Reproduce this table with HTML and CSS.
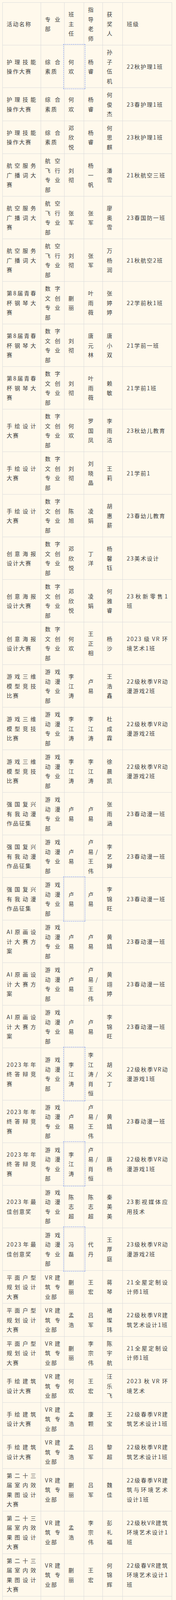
FILE: index.html
```html
<!DOCTYPE html>
<html lang="zh-CN">
<head>
<meta charset="utf-8">
<meta name="viewport" content="width=device-width, initial-scale=1">
<title>获奖名单</title>
<link rel="stylesheet" href="styles.css">
</head>
<body>
<div class="page">
<table class="awards">
<colgroup><col class="c1"><col class="c2"><col class="c3"><col class="c4"><col class="c5"><col class="c6"></colgroup>
<tbody>
<tr><td>活动名称</td><td>专业部</td><td>班主任</td><td>指导老师</td><td>获奖人</td><td>班级</td></tr>
<tr><td>护理技能操作大赛</td><td>综合素质</td><td class="sel">何欢</td><td>杨睿</td><td>孙子伍机</td><td>22秋护理1班</td></tr>
<tr><td>护理技能操作大赛</td><td>综合素质</td><td>何欢</td><td>杨睿</td><td>何俊杰</td><td>23春护理1班</td></tr>
<tr><td>护理技能操作大赛</td><td>综合素质</td><td>邓欣悦</td><td>杨睿</td><td>何思麒</td><td>23秋护理1班</td></tr>
<tr><td>航空服务广播词大赛</td><td>航空飞行专业部</td><td>刘彻</td><td>杨一帆</td><td>潘雪</td><td>21秋航空三班</td></tr>
<tr><td>航空服务广播词大赛</td><td>航空飞行专业部</td><td>张军</td><td>张军</td><td>廖奥雪</td><td>23春国防一班</td></tr>
<tr><td>航空服务广播词大赛</td><td>航空飞行专业部</td><td>刘彻</td><td>张军</td><td>万杨润</td><td>21秋航空2班</td></tr>
<tr><td>第8届青春杯钢琴大赛</td><td>数字文创专业部</td><td>蒯丽</td><td>叶雨薇</td><td>张婷婷</td><td>22学前秋1班</td></tr>
<tr><td>第8届青春杯钢琴大赛</td><td>数字文创专业部</td><td>刘彻</td><td>唐元林</td><td>唐小双</td><td>21学前一班</td></tr>
<tr><td>第8届青春杯钢琴大赛</td><td>数字文创专业部</td><td>刘彻</td><td>叶雨薇</td><td>赖敏</td><td>21学前1班</td></tr>
<tr><td>手绘设计大赛</td><td>数字文创专业部</td><td>何欢</td><td>罗国凤</td><td>李雨洁</td><td>23秋幼儿教育</td></tr>
<tr><td>手绘设计大赛</td><td>数字文创专业部</td><td>刘彻</td><td>刘晓晶</td><td>王莉</td><td>21学前1</td></tr>
<tr><td>手绘设计大赛</td><td>数字文创专业部</td><td>陈旭</td><td>凌娟</td><td>胡惠薪</td><td>23春幼儿教育</td></tr>
<tr><td>创意海报设计大赛</td><td>数字文创专业部</td><td>邓欣悦</td><td>丁洋</td><td>杨馨钰</td><td>23美术设计</td></tr>
<tr><td>创意海报设计大赛</td><td>数字文创专业部</td><td>邓欣悦</td><td>凌娟</td><td>何雅睿</td><td>23秋新零售1班</td></tr>
<tr><td>创意海报设计大赛</td><td>数字文创专业部</td><td>何欢</td><td>王正相</td><td>杨沙</td><td>2023级VR环境艺术1班</td></tr>
<tr><td>游戏三维模型竞技比赛</td><td>游戏动漫专业部</td><td>李江涛</td><td>卢易</td><td>王浩鑫</td><td>22级秋季VR动漫游戏2班</td></tr>
<tr><td>游戏三维模型竞技比赛</td><td>游戏动漫专业部</td><td>李江涛</td><td>李江涛</td><td>杜成霖</td><td>22级秋季VR动漫游戏2班</td></tr>
<tr><td>游戏三维模型竞技比赛</td><td>游戏动漫专业部</td><td>李江涛</td><td>李江涛</td><td>徐晨凯</td><td>22级秋季VR动漫游戏2班</td></tr>
<tr><td>强国复兴有我动漫作品征集</td><td>游戏动漫专业部</td><td>卢易</td><td>卢易</td><td>张雨涵</td><td>23春动漫一班</td></tr>
<tr><td>强国复兴有我动漫作品征集</td><td>游戏动漫专业部</td><td>卢易</td><td>卢易/王伟</td><td>李艺婵</td><td>23春动漫一班</td></tr>
<tr><td>强国复兴有我动漫作品征集</td><td>游戏动漫专业部</td><td class="sel">卢易</td><td>卢易</td><td>李锦旺</td><td>23春动漫一班</td></tr>
<tr><td>AI原画设计大赛方案</td><td>游戏动漫专业部</td><td>卢易</td><td>卢易</td><td>黄婧</td><td>23春动漫一班</td></tr>
<tr><td>AI原画设计大赛方案</td><td>游戏动漫专业部</td><td>卢易</td><td>卢易/王伟</td><td>黄翊婷</td><td>23春动漫一班</td></tr>
<tr><td>AI原画设计大赛方案</td><td>游戏动漫专业部</td><td>卢易</td><td>卢易</td><td>李锦旺</td><td>23春动漫一班</td></tr>
<tr><td>2023年年终答辩竞赛</td><td>游戏动漫专业部</td><td class="sel">李江涛</td><td>李江涛/肖恒</td><td>胡义丁</td><td>22级秋季VR动漫游戏1班</td></tr>
<tr><td>2023年年终答辩竞赛</td><td>游戏动漫专业部</td><td>卢易</td><td>卢易/王伟</td><td>黄婧</td><td>23春动漫一班</td></tr>
<tr><td>2023年年终答辩竞赛</td><td>游戏动漫专业部</td><td class="sel">李江涛</td><td>卢易/肖恒</td><td>唐杨</td><td>22级秋季VR动漫游戏1班</td></tr>
<tr><td>2023年最佳创意奖</td><td>游戏动漫专业部</td><td>陈志超</td><td>陈志超</td><td>秦美美</td><td>23影视媒体应用技术</td></tr>
<tr><td>2023年最佳创意奖</td><td>游戏动漫专业部</td><td class="sel">冯磊</td><td>代丹</td><td>王厚庭</td><td>23级秋季VR动漫游戏2班</td></tr>
<tr><td>平面户型规划设计大赛</td><td>VR建筑专业部</td><td>蒯丽</td><td>王宏</td><td>蒋琴</td><td>21全屋定制设计师1班</td></tr>
<tr><td>平面户型规划设计大赛</td><td>VR建筑专业部</td><td>孟浩</td><td>吕军</td><td>褚璨玮</td><td>22级秋季VR建筑艺术设计1班</td></tr>
<tr><td>平面户型规划设计大赛</td><td>VR建筑专业部</td><td>蒯丽</td><td>李宗伟</td><td>陈宇航</td><td>21全屋定制设计师1班</td></tr>
<tr><td>手绘建筑设计大赛</td><td>VR建筑专业部</td><td>何欢</td><td>王宏</td><td>汪乐飞</td><td>2023秋VR环境艺术</td></tr>
<tr><td>手绘建筑设计大赛</td><td>VR建筑专业部</td><td>孟浩</td><td>康颗</td><td>王宝</td><td>22级春季VR建筑艺术设计1班</td></tr>
<tr><td>手绘建筑设计大赛</td><td>VR建筑专业部</td><td>孟浩</td><td>吕军</td><td>黎超</td><td>22级秋季VR建筑艺术设计1班</td></tr>
<tr><td>第二十三届室内效果图设计大赛</td><td>VR建筑专业部</td><td>蒯丽</td><td>吕军</td><td>魏佳</td><td>22级春季VR建筑与环境艺术设计1班</td></tr>
<tr><td>第二十三届室内效果图设计大赛</td><td>VR建筑专业部</td><td>孟浩</td><td>李宗伟</td><td>彭礼福</td><td>22级秋VR建筑环境艺术设计1班</td></tr>
<tr><td>第二十三届室内效果图设计大赛</td><td>VR建筑专业部</td><td>蒯丽</td><td>王宏</td><td>何锦辉</td><td>22级春VR建筑环境艺术设计1班</td></tr>
<tr><td>2023年秋季学期答辩大赛</td><td>VR建筑专业部</td><td>何欢</td><td>王宏</td><td>陈宇航</td><td>21全屋定制设计师1班</td></tr>
<tr><td>2023年秋季学期答辩大赛</td><td>VR建筑专业部</td><td>何欢</td><td>康颗</td><td>王宝</td><td>22级春季VR建筑艺术设计1班</td></tr>
<tr><td>2023年秋季学期答辩大赛</td><td>VR建筑专业部</td><td>孟浩</td><td>吕军</td><td>周佳奇</td><td>22级秋季VR建筑艺术设计1班</td></tr>
<tr><td>2023年秋季外部项目业绩竞赛</td><td>VR建筑专业部</td><td>蒯丽</td><td>吕军</td><td>徐源</td><td>23春季VR建筑艺术设计1班</td></tr>
<tr><td>2023年秋季外部项目业绩竞赛</td><td>VR建筑专业部</td><td>孟浩</td><td>李宗伟</td><td>王保</td><td>22级春季VR建筑艺术设计1班</td></tr>
<tr><td>2023年秋季外部项目业绩竞赛</td><td>VR建筑专业部</td><td>蒯丽</td><td>王宏</td><td>刘乐乐</td><td>22级秋VR建筑环境艺术设计1班</td></tr>
<tr><td>双11直播比赛</td><td>新媒体电商专业部</td><td>刘涛</td><td>伏晓艳</td><td>何雪锋</td><td>23春电子商务（新零售）1班</td></tr>
<tr><td>双11直播比赛</td><td>新媒体电商专业部</td><td>刘涛</td><td>伏晓艳</td><td>任洪</td><td>23春电子商务（新零售）1班</td></tr>
<tr><td>双11直播比赛</td><td>新媒体电商专业部</td><td>刘涛</td><td>伏晓艳</td><td>郭千雅</td><td>23春电子商务（新零售）1班</td></tr>
<tr><td>编程语言听写大赛</td><td>AI大数据专业部</td><td>陈志超</td><td>叶鉴原</td><td>吴俊尧</td><td>22秋软件开发二班</td></tr>
<tr><td>编程语言听写大赛</td><td>AI大数据专业部</td><td>唐强</td><td>李阳勇</td><td>蔡雨辰</td><td>22秋人工智能</td></tr>
<tr><td>编程语言听写大赛</td><td>AI大数据专业部</td><td>蒯丽</td><td>王佩文</td><td>卢俊宏</td><td>23计算机应用1班</td></tr>
<tr><td>“手指狂舞”打字比赛</td><td>AI大数据专业部</td><td>唐强</td><td>李阳勇</td><td>王羽浩</td><td>22人工智能</td></tr>
<tr><td>“手指狂舞”打字比赛</td><td>AI大数据专业部</td><td>蒯丽</td><td>郑欣</td><td>陈浩然</td><td>22秋软件开发1班</td></tr>
<tr><td>“手指狂舞”打字比赛</td><td>AI大数据专业部</td><td>饶家城</td><td>卿舒心</td><td>杨诗宴</td><td>21计算机2班</td></tr>
<tr><td>计算机知识大赛</td><td>AI大数据专业部</td><td>饶家城</td><td>卿舒心</td><td>高敬楷</td><td>21计算机2班</td></tr>
<tr><td>计算机知识大赛</td><td>AI大数据专业部</td><td>唐强</td><td>李阳勇</td><td>蔡雨辰</td><td>22秋人工智能与移动APP</td></tr>
<tr><td>计算机知识大赛</td><td>AI大数据专业部</td><td>刘涛</td><td>马政</td><td>魏荣芃</td><td>22大数据二</td></tr>
</tbody>
</table>
</div>
</body>
</html>
```

FILE: styles.css
```css
html {
  -webkit-text-size-adjust: none;
  text-size-adjust: none;
}

html, body {
  margin: 0;
  padding: 0;
  background: #fff9ec;
}

body {
  font-family: "Noto Sans CJK SC", sans-serif;
  font-size: 14px;
  color: #3e3e3e;
}

.page {
  padding: 6px 11px 30px 6px;
}

.awards {
  border-collapse: collapse;
  table-layout: fixed;
  width: 433px;
}

.c1 { width: 98px; }
.c2 { width: 60px; }
.c3 { width: 50px; }
.c4 { width: 48px; }
.c5 { width: 51px; }
.c6 { width: 126px; }

.awards td {
  border: 1px solid #dcdcdc;
  padding: 5px 10px;
  line-height: 24.5px;
  letter-spacing: 2px;
  text-align: justify;
  vertical-align: middle;
}

.awards td:nth-child(2) {
  padding-right: 8px;
}

.awards td:nth-child(6) {
  padding-right: 8.5px;
}

.awards td.sel {
  outline: 1px dashed #6f8ff0;
  outline-offset: 2px;
}
```
